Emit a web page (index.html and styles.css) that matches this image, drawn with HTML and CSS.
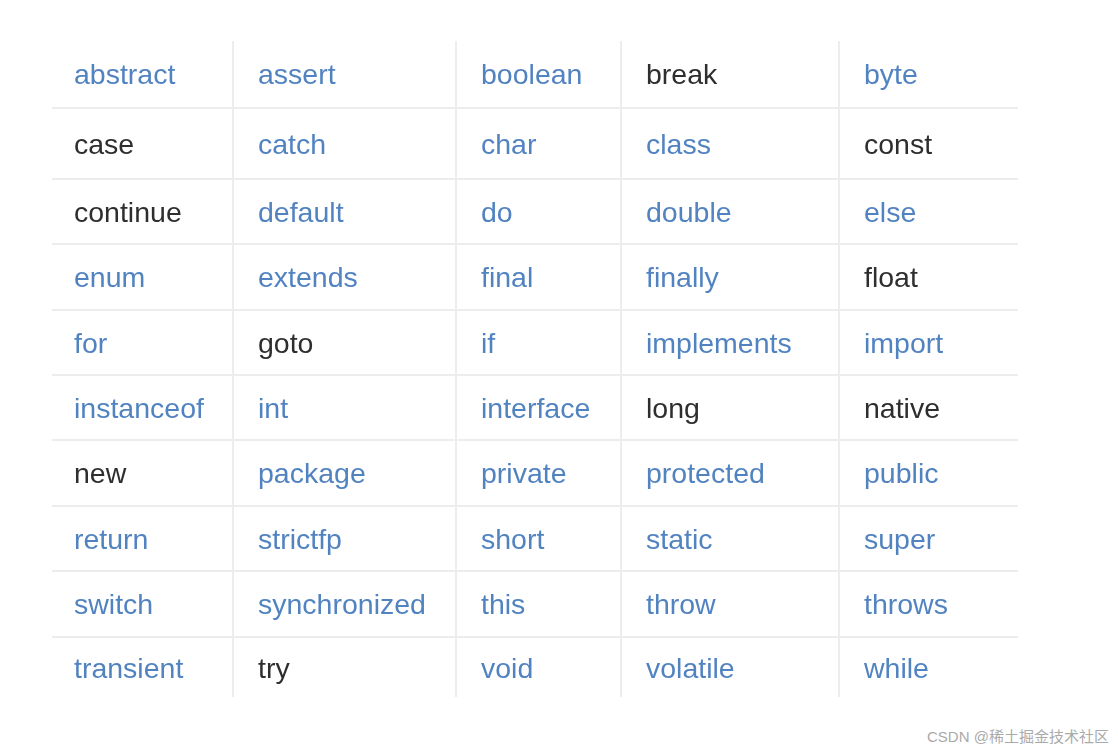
FILE: index.html
```html
<!DOCTYPE html>
<html lang="zh">
<head>
<meta charset="utf-8">
<title>Java 关键字</title>
<link rel="stylesheet" href="styles.css">
</head>
<body>
<div class="page">
  <div class="kw-table">
    <div class="cell b">abstract</div><div class="cell b">assert</div><div class="cell b">boolean</div><div class="cell d">break</div><div class="cell b">byte</div>
    <div class="cell d">case</div><div class="cell b">catch</div><div class="cell b">char</div><div class="cell b">class</div><div class="cell d">const</div>
    <div class="cell d">continue</div><div class="cell b">default</div><div class="cell b">do</div><div class="cell b">double</div><div class="cell b">else</div>
    <div class="cell b">enum</div><div class="cell b">extends</div><div class="cell b">final</div><div class="cell b">finally</div><div class="cell d">float</div>
    <div class="cell b">for</div><div class="cell d">goto</div><div class="cell b">if</div><div class="cell b">implements</div><div class="cell b">import</div>
    <div class="cell b">instanceof</div><div class="cell b">int</div><div class="cell b">interface</div><div class="cell d">long</div><div class="cell d">native</div>
    <div class="cell d">new</div><div class="cell b">package</div><div class="cell b">private</div><div class="cell b">protected</div><div class="cell b">public</div>
    <div class="cell b">return</div><div class="cell b">strictfp</div><div class="cell b">short</div><div class="cell b">static</div><div class="cell b">super</div>
    <div class="cell b">switch</div><div class="cell b">synchronized</div><div class="cell b">this</div><div class="cell b">throw</div><div class="cell b">throws</div>
    <div class="cell b last">transient</div><div class="cell d last">try</div><div class="cell b last">void</div><div class="cell b last">volatile</div><div class="cell b last">while</div>
  </div>
  <div class="watermark">CSDN @稀土掘金技术社区</div>
</div>
</body>
</html>
```
FILE: styles.css
```css
html, body {
  margin: 0;
  padding: 0;
  background: #ffffff;
}

.page {
  position: relative;
  width: 1118px;
  height: 753px;
  padding: 41px 0 0 52px;
  box-sizing: border-box;
  font-family: "Liberation Sans", Arial, sans-serif;
}

.kw-table {
  display: grid;
  grid-template-columns: 180px 223px 165px 218px 180px;
  grid-template-rows: 68px 71px 65px 66px 65px 65px 66px 65px 66px 59px;
  width: 966px;
  filter: blur(0.5px);
}

.cell {
  display: flex;
  align-items: center;
  padding-left: 24px;
  padding-top: 1px;
  font-size: 28.5px;
  border-bottom: 2px solid #ededed;
  border-left: 2px solid #ededed;
  box-sizing: border-box;
}

.cell:nth-child(5n+1) {
  border-left: none;
  padding-left: 22px;
}

.cell.last {
  border-bottom: none;
}

.b {
  color: #5283c1;
}

.d {
  color: #2e2e2e;
}

.watermark {
  position: absolute;
  left: 927px;
  top: 728px;
  font-size: 15px;
  line-height: 18px;
  color: #aaaaaa;
  font-family: "Liberation Sans", "Noto Sans CJK SC", sans-serif;
  white-space: nowrap;
}
```
